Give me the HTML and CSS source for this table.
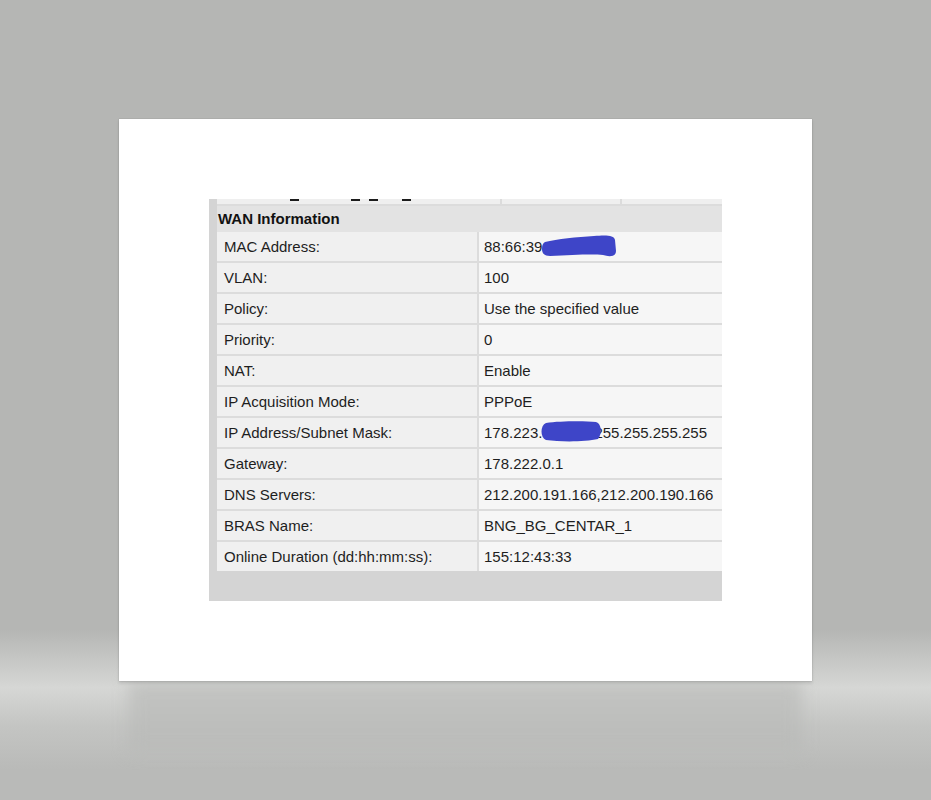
FILE: index.html
```html
<!DOCTYPE html>
<html lang="en">
<head>
    <meta charset="UTF-8">
    <meta name="viewport" content="width=device-width, initial-scale=1.0">
    <title>WAN Information</title>
    <link rel="stylesheet" href="styles.css">
</head>
<body>
    <div class="sheet">
        <div class="panel">
            <!-- bottom edge of the previous table, cut off by the screenshot -->
            <div class="cut-row">
                <div class="cut-cell">
                    <span class="mark m1"></span><span class="mark m2"></span><span class="mark m3"></span><span class="mark m4"></span>
                </div>
                <div class="cut-sep"></div>
                <div class="cut-cell"></div>
                <div class="cut-sep"></div>
                <div class="cut-cell"></div>
            </div>

            <div class="wan-table">
                <div class="wan-title">WAN Information</div>

                <div class="wan-row">
                    <div class="wan-label">MAC Address:</div>
                    <div class="wan-value">
                        88:66:39
                        <svg class="blot blot-mac" width="74" height="22" viewBox="0 0 74 22">
                            <path d="M3,7 C15,4 35,2 52,1 C64,0 72,0 73,5 L74,16 C74,22 67,22 61,20 C50,19 30,20 8,21 C2,21 0,18 0,14 C0,10 1,8 3,7 Z"/>
                        </svg>
                    </div>
                </div>
                <div class="wan-row">
                    <div class="wan-label">VLAN:</div>
                    <div class="wan-value">100</div>
                </div>
                <div class="wan-row">
                    <div class="wan-label">Policy:</div>
                    <div class="wan-value">Use the specified value</div>
                </div>
                <div class="wan-row">
                    <div class="wan-label">Priority:</div>
                    <div class="wan-value">0</div>
                </div>
                <div class="wan-row">
                    <div class="wan-label">NAT:</div>
                    <div class="wan-value">Enable</div>
                </div>
                <div class="wan-row">
                    <div class="wan-label">IP Acquisition Mode:</div>
                    <div class="wan-value">PPPoE</div>
                </div>
                <div class="wan-row">
                    <div class="wan-label">IP Address/Subnet Mask:</div>
                    <div class="wan-value">
                        178.223.<span class="hidden-part"></span>255.255.255.255
                        <svg class="blot blot-ip" width="62" height="21" viewBox="0 0 62 21">
                            <path d="M6,2 C20,0 45,0 56,1 C62,3 62,13 58,18 C45,21 20,21 6,19 C0,17 0,4 6,2 Z"/>
                        </svg>
                    </div>
                </div>
                <div class="wan-row">
                    <div class="wan-label">Gateway:</div>
                    <div class="wan-value">178.222.0.1</div>
                </div>
                <div class="wan-row">
                    <div class="wan-label">DNS Servers:</div>
                    <div class="wan-value">212.200.191.166,212.200.190.166</div>
                </div>
                <div class="wan-row">
                    <div class="wan-label">BRAS Name:</div>
                    <div class="wan-value">BNG_BG_CENTAR_1</div>
                </div>
                <div class="wan-row">
                    <div class="wan-label">Online Duration (dd:hh:mm:ss):</div>
                    <div class="wan-value">155:12:43:33</div>
                </div>
            </div>
        </div>
    </div>
</body>
</html>
```

FILE: styles.css
```css
* {
    margin: 0;
    padding: 0;
    box-sizing: border-box;
}

body {
    font-family: "Liberation Sans", Arial, sans-serif;
    min-height: 800px;
    padding-top: 119px;
    background: linear-gradient(to bottom,
        #b5b6b4 0px,
        #b5b6b4 630px,
        #d6d7d5 688px,
        #c4c5c3 725px,
        #b9bab8 770px,
        #b9bab8 800px);
}

.sheet {
    position: relative;
    width: 693px;
    height: 562px;
    margin-left: 119px;
    padding: 80px 0 0 90px;
    background: #fff;
    box-shadow: 0 0 1px rgba(0, 0, 0, 0.25), 0 2px 3px rgba(0, 0, 0, 0.12);
}

/* reflection under the sheet */
.sheet::after {
    content: "";
    position: absolute;
    top: 100%;
    left: 10px;
    right: 10px;
    height: 70px;
    background: linear-gradient(to bottom, #c3c4c2, #b9bab8);
    filter: blur(8px);
    z-index: -1;
}

.panel {
    width: 513px;
    padding: 0 0 30px 8px;
    background: #d4d4d4;
    overflow: hidden;
}

.cut-row {
    display: grid;
    grid-template-columns: 283px 2px 118px 2px 1fr;
    height: 7px;
    background: #efefef;
    border-bottom: 2px solid #dcdcdc;
    overflow: hidden;
}

.cut-cell {
    position: relative;
    overflow: hidden;
}

.cut-sep {
    background: #dcdcdc;
}

/* tails of the cut-off text above */
.mark {
    position: absolute;
    top: 0;
    width: 9px;
    height: 2px;
    background: #1c1c1c;
}

.m1 { left: 73px; }
.m2 { left: 134px; }
.m3 { left: 152px; }
.m4 { left: 185px; }

.wan-table {
    width: 505px;
    color: #1e1e1e;
    font-size: 15px;
}

.wan-title {
    height: 26px;
    line-height: 26px;
    padding-left: 1px;
    background: #e3e3e3;
    font-weight: 700;
    color: #111;
}

.wan-row {
    display: grid;
    grid-template-columns: 260px 1fr;
    column-gap: 2px;
    height: 31px;
    background: #dcdcdc;
    padding-bottom: 2px;
}

.wan-row:last-child {
    height: 29px;
    padding-bottom: 0;
}

.wan-label,
.wan-value {
    line-height: 29px;
    white-space: nowrap;
}

.wan-label {
    padding-left: 7px;
    background: #f0f0f0;
}

.wan-value {
    position: relative;
    padding-left: 5px;
    background: #f6f6f6;
}

.hidden-part {
    display: inline-block;
    width: 52px;
}

.blot {
    position: absolute;
    fill: #3e45c8;
}

.blot-mac {
    left: 63px;
    top: 3px;
}

.blot-ip {
    left: 61px;
    top: 3px;
}
```
